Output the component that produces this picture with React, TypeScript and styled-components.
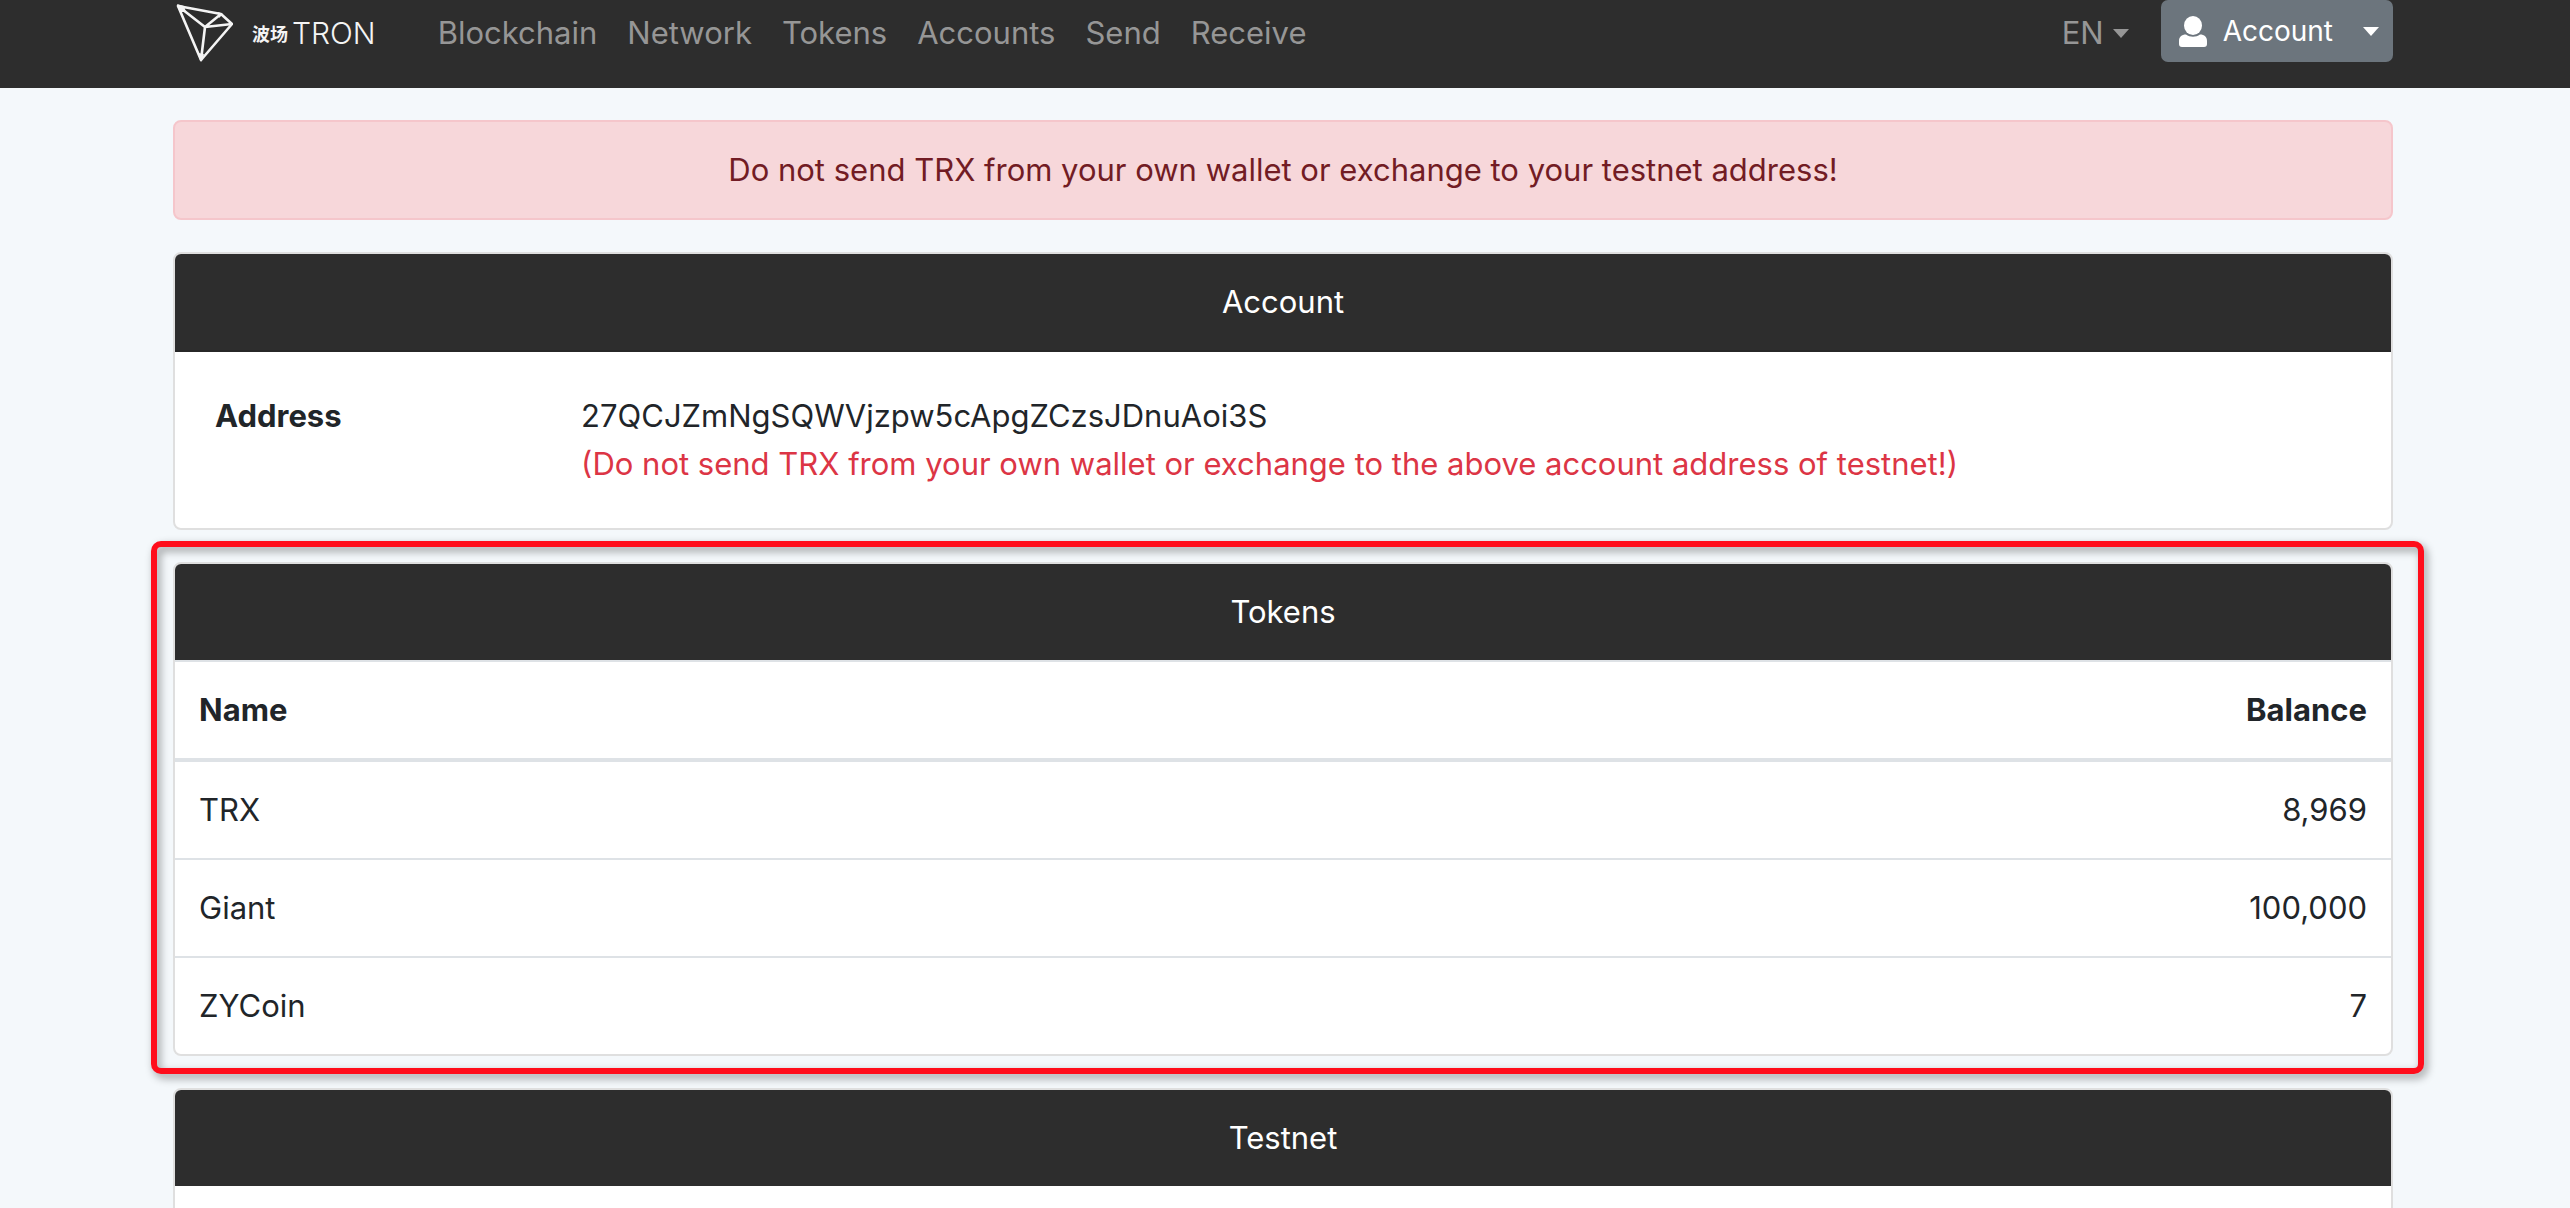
import React from "react";
import styled, { createGlobalStyle } from "styled-components";

const GlobalStyle = createGlobalStyle`
  *, *::before, *::after { box-sizing: border-box; }
  body {
    margin: 0;
    background: #f4f8fb;
    color: #212529;
    font-family: Inter, "Liberation Sans", "Noto Sans CJK SC", sans-serif;
    font-size: 31px;
    line-height: 48px;
  }
`;

const Page = styled.div`
  height: 100vh;
  overflow: hidden;
`;

const Container = styled.div`
  width: 100%;
  max-width: 2284px;
  margin: 0 auto;
  padding: 0 34px 0 30px;
`;

const Header = styled.header`
  height: 88px;
  background: #2d2d2d;
`;

const NavBar = styled(Container)`
  display: flex;
  align-items: flex-start;
`;

const Brand = styled.a`
  display: flex;
  align-items: center;
  gap: 19px;
  height: 66px;
  margin-right: 62px;
  color: #f4f4f4;
  text-decoration: none;
`;

const BrandText = styled.span`
  display: flex;
  align-items: center;
  gap: 4px;
  line-height: 20px;
`;

const BrandChinese = styled.span`
  font-family: "Noto Sans CJK SC", sans-serif;
  font-size: 18px;
  font-weight: 700;
`;

const BrandLatin = styled.span`
  font-family: Inter, "Liberation Sans", sans-serif;
  font-size: 30px;
  font-weight: 300;
`;

const Links = styled.nav`
  display: flex;
  flex: 1;
  gap: 30px;
  padding-top: 9px;
`;

const NavLink = styled.a`
  color: #969696;
  text-decoration: none;
`;

const Language = styled.button`
  display: flex;
  align-items: center;
  gap: 9px;
  margin: 9px 32px 0 0;
  padding: 0;
  border: 0;
  background: none;
  color: #969696;
  font: inherit;
`;

const AccountButton = styled.button`
  display: flex;
  align-items: center;
  height: 62px;
  padding: 0 14px 0 18px;
  border: 0;
  border-radius: 7px;
  background: #6c757d;
  color: #fff;
  font: inherit;
  font-size: 28px;

  svg { margin-right: 16px; }
`;

const Caret = styled.span<{ $push?: boolean }>`
  margin-left: ${(p) => (p.$push ? "30px" : "0")};
  border-top: 9px solid currentColor;
  border-left: 8px solid transparent;
  border-right: 8px solid transparent;
`;

const Main = styled(Container)`
  display: flex;
  flex-direction: column;
  gap: 32px;
  padding-top: 32px;
`;

const Alert = styled.div`
  padding: 24px;
  border: 2px solid #f5c6cb;
  border-radius: 8px;
  background: #f7d7da;
  color: #721c24;
  text-align: center;
`;

const Card = styled.section`
  position: relative;
  border: 2px solid #dfdfdf;
  border-radius: 8px;
  background: #fff;
`;

const CardHeader = styled.h2<{ $ruled?: boolean }>`
  margin: 0;
  padding: 24px;
  border-bottom: ${(p) => (p.$ruled ? "2px solid #272727" : "0")};
  border-radius: 6px 6px 0 0;
  background: #2d2d2d;
  color: #fff;
  font-size: 31px;
  font-weight: 400;
  text-align: center;
`;

const Details = styled.dl`
  display: grid;
  grid-template-columns: 17% 1fr;
  column-gap: 3px;
  margin: 0;
  padding: 40px;
`;

const Term = styled.dt`
  font-weight: 700;
`;

const Value = styled.dd`
  margin: 0;
`;

const Warning = styled.p`
  margin: 0;
  color: #dc3545;
`;

const Table = styled.table`
  width: 100%;
  border-collapse: collapse;

  th, td {
    padding: 24px;
    border-top: 2px solid #dee2e6;
    text-align: left;
  }
  th {
    border-bottom: 4px solid #dee2e6;
    font-weight: 700;
  }
  th:last-child, td:last-child { text-align: right; }
`;

const Highlight = styled.div`
  position: absolute;
  inset: -23px -33px -20px -24px;
  border: 6px solid #ff0d1b;
  border-radius: 10px;
  filter: drop-shadow(3px 4px 4px rgba(0, 0, 0, 0.4));
  pointer-events: none;
`;

const EmptyBody = styled.div`
  height: 176px;
`;

const TronMark = () => (
  <svg width="60" height="66" viewBox="0 0 60 66" fill="none" stroke="#f4f4f4" strokeWidth="2.6" strokeLinejoin="round" aria-hidden="true">
    <path d="M5 6 L48 14 L59 24 L28 60 Z" />
    <path d="M5 6 L32 27 L48 14 M32 27 L59 24 M32 27 L28 60" />
    <path d="M4 4 L11 6 L13 12 L8 12 Z M45 12 L50 14 L46 18 Z M25 53 L31 54 L28 62 Z" fill="#f4f4f4" stroke="none" />
  </svg>
);

const UserIcon = () => (
  <svg width="28" height="31" viewBox="0 0 28 31" fill="#fff" aria-hidden="true">
    <ellipse cx="14" cy="9.5" rx="9" ry="9.5" />
    <path d="M7 18.5 C11 21.5 17 21.5 21 18.5 C25.5 18.5 28 21 28 25 V28 Q28 31 25 31 H3 Q0 31 0 28 V25 C0 21 2.500 18.500 7 18.500 Z" />
  </svg>
);

const links = ["Blockchain", "Network", "Tokens", "Accounts", "Send", "Receive"];

const tokens = [
  { name: "TRX", balance: 8969 },
  { name: "Giant", balance: 100000 },
  { name: "ZYCoin", balance: 7 },
];

export default function App() {
  return (
    <Page>
      <GlobalStyle />
      <Header>
        <NavBar>
          <Brand href="#">
            <TronMark />
            <BrandText>
              <BrandChinese>波场</BrandChinese>
              <BrandLatin>TRON</BrandLatin>
            </BrandText>
          </Brand>
          <Links>
            {links.map((label) => (
              <NavLink key={label} href="#">{label}</NavLink>
            ))}
          </Links>
          <Language type="button">EN<Caret /></Language>
          <AccountButton type="button">
            <UserIcon />
            Account
            <Caret $push />
          </AccountButton>
        </NavBar>
      </Header>
      <Main as="main">
        <Alert role="alert">
          Do not send TRX from your own wallet or exchange to your testnet address!
        </Alert>
        <Card>
          <CardHeader $ruled>Account</CardHeader>
          <Details>
            <Term>Address</Term>
            <Value>
              27QCJZmNgSQWVjzpw5cApgZCzsJDnuAoi3S
              <Warning>
                (Do not send TRX from your own wallet or exchange to the above account address of testnet!)
              </Warning>
            </Value>
          </Details>
        </Card>
        <Card>
          <CardHeader>Tokens</CardHeader>
          <Table>
            <thead>
              <tr>
                <th scope="col">Name</th>
                <th scope="col">Balance</th>
              </tr>
            </thead>
            <tbody>
              {tokens.map((token) => (
                <tr key={token.name}>
                  <td>{token.name}</td>
                  <td>{token.balance.toLocaleString("en-US")}</td>
                </tr>
              ))}
            </tbody>
          </Table>
          <Highlight />
        </Card>
        <Card>
          <CardHeader>Testnet</CardHeader>
          <EmptyBody />
        </Card>
      </Main>
    </Page>
  );
}
